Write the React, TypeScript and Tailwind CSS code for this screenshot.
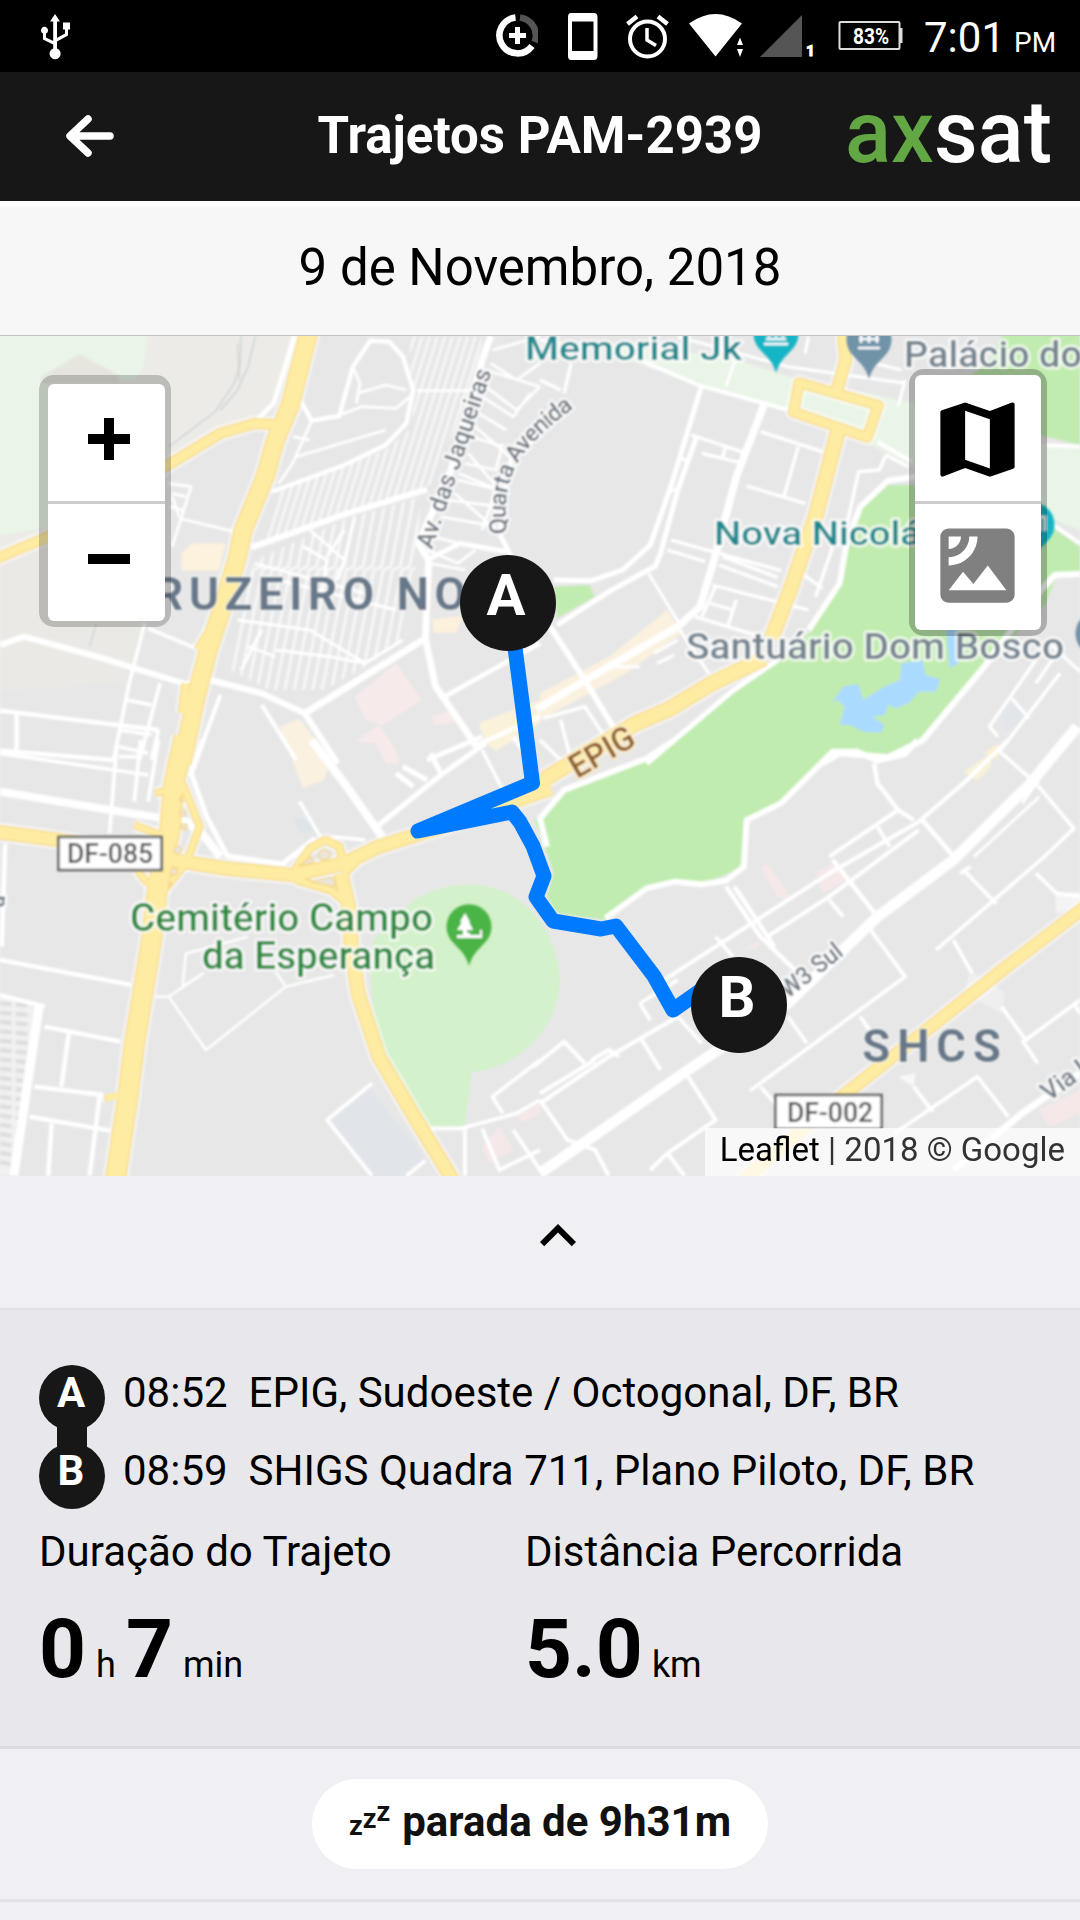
import React from "react";
import { MdExpandLess, MdMap, MdSatellite } from "react-icons/md";

type Line = [string, number];

interface Sector {
  transform: string;
  areas: [string, string][];
  roads: Line[];
  highways: Line[];
}

const S = "scale(0.34439 0.33333)";

const sectors: Sector[] = [
  {
    transform: `translate(0 330) ${S}`,
    areas: [
      ["M0 0H880L800 220L740 255L480 400L0 690Z", "#ecebe7"],
      ["M0 700L140 650L410 880L360 1060L0 1080Z", "#eae9e5"],
      ["M0 0H430L420 100L395 150H350L230 72L150 130L160 590L0 615Z", "#e9f5e6"],
      ["M120 140L230 72L345 135V160H120Z", "#e6e6df"],
      ["M560 640H655L635 722H527V670Z", "#fdf2de"],
      ["M1150 1000L1225 1110L1110 1185L1060 1170L1030 1100Z", "#f7eaea"],
      ["M1030 1235L1100 1185L1150 1260L1160 1300H1120L1090 1240Z", "#f7eaea"],
      ["M1255 1160L1310 1140L1320 1180L1260 1185Z", "#f7eaea"],
      ["M812 1190L870 1168L960 1290L940 1350L880 1375Z", "#fbf1e0"],
      ["M1255 868L1345 858L1325 908H1260Z", "#fdf0dc"],
      ["M1390 1180L1490 1140L1568 1110V1180L1440 1262L1410 1240Z", "#fbf2da"],
    ],
    roads: [
      ["M855 18L795 220L745 270", 14],
      ["M790 485L1000 405L1120 345L1180 280L1200 180L1170 80L1130 35L1075 32L1025 110L985 258L905 272L875 215", 13],
      ["M905 272L850 400L810 460M850 320L900 330M860 380L1120 300M960 265L1050 230L1150 235L1190 200M1040 190L1120 165L1180 180M1025 110L1045 160L1035 220", 8],
      ["M730 652L1000 553L1240 478", 18],
      ["M1425 18L1400 90L1310 420L1215 640L1245 690L1235 925L1265 1070L1345 1190L1390 1260", 20],
      ["M1235 925L885 1150", 20],
      ["M0 945L70 920L300 985L400 1018L540 1062L610 1050L760 1090L885 1150L980 1300", 18],
      ["M760 1125L860 1290M640 1095L570 1290", 12],
      ["M430 895L570 955M420 880L375 1060L330 1290M465 1060L405 1290M350 1200L440 1215M370 1110L440 1125M345 1250L430 1270M460 1200L440 1290", 11],
      ["M0 1142L460 1200M0 1262L330 1290M48 1150V1265", 13],
      ["M490 460L555 470L500 650M520 565L680 605M500 490L540 500M495 530L530 540M500 500L520 560", 8],
      ["M1568 310L1485 385L1462 500L1452 615L1490 690M1240 690L1335 640L1470 665", 14],
      ["M1290 1100L1568 940M1385 1245L1568 1160M1490 1220L1540 1290M1240 1290L1400 1220", 14],
      ["M1210 182H1370M1430 60L1568 20M1425 100L1500 150L1568 100M1410 120L1568 170M1410 170L1500 240L1568 170M1390 250L1470 300M1400 200L1490 260L1540 190M1370 320L1460 350M1380 290L1480 380M1350 400L1440 420L1460 340M1360 370L1450 480L1330 430M1330 450L1450 480M1300 510L1450 530M1320 490L1430 590M1280 560L1440 590M1400 600L1440 480M1260 620L1330 640M1250 700L1350 720M1240 660L1330 700L1380 660", 8],
      ["M740 700L1060 790M690 870L900 900L1060 1000M770 740L1150 840M800 960L960 980L1060 1000L1170 930M900 600L1000 690L980 750M880 650L950 690L930 800M1000 600L950 680M1030 560L1000 690M720 950L800 980M700 1020L760 900", 9],
    ],
    highways: [
      ["M898 0L842 228L800 330L770 440L706 600L690 680L640 850L605 960L572 1090L528 1300", 52],
      ["M810 285L740 280L640 310L480 410L140 620L-20 690", 30],
      ["M575 960L610 900M540 1060L530 1150", 24],
    ],
  },
  {
    transform: `translate(540 330) ${S}`,
    areas: [
      ["M180 40L540 80L740 145L1090 220V410L960 345L720 240L440 150L250 90Z", "#e9f5e6"],
      ["M1440 340L1568 350V600L1440 550Z", "#e9f5e6"],
      ["M1350 0H1568V345L1470 320L1160 200L1300 100Z", "#c1ecb0"],
      ["M1080 465H1010L930 540L900 640L870 760L790 900L690 1000L560 1090L300 1300H820L870 1262L1010 1270L1110 1220L1290 1010L1340 955L1470 820L1500 735L1568 730V650L1440 555Z", "#c1ecb0"],
      ["M850 1115L880 1070L925 1062L938 1110L1000 1070L1045 1050L1050 1000L1110 990L1120 1035L1162 1048L1150 1085H1100L1070 1120L1035 1135L1010 1125L1002 1155L965 1160L1000 1185L990 1208L940 1205L900 1185H870L885 1130L865 1110Z", "#abdaff"],
      ["M1178 890H1215V1000L1190 1015Z", "#abdaff"],
      ["M40 770L145 765L158 800L50 865Z", "#c1ecb0"],
      ["M0 1090L200 980L370 840L410 910L250 1030L0 1170Z", "#fbf1df"],
      ["M1340 1140L1380 1110L1410 1160L1350 1210Z", "#e1e6ea"],
      ["M1290 1270L1330 1240V1290Z", "#fcf0d0"],
    ],
    roads: [
      ["M-10 1138L130 1052L400 890L465 830L508 680L570 440L650 225", 22],
      ["M40 750L150 752L240 720L320 645L380 470L470 165M50 885L200 785L335 708L350 670L400 480L455 320", 15],
      ["M90 100L70 190M0 150L60 180M60 40L0 30", 10],
      ["M300 95L460 165L720 240M980 335L1080 395", 12],
      ["M400 20L720 110L1060 160M540 170L570 80M1060 150L1040 230M970 100L1050 120M780 20L770 70", 9],
      ["M440 315L600 370M470 370L590 400M540 345L530 385M410 380L425 395M380 480H400", 10],
      ["M640 305L820 365M750 350L708 500M600 468L770 520M1005 375L985 420L925 425L890 590M1005 375L1070 410", 10],
      ["M380 630L700 722M370 660L480 695M530 680L690 742M520 705L690 770M500 765L780 840M760 730L820 775M450 860L640 920M850 650L800 800M570 810L545 890M510 770L470 860M495 820L560 840", 10],
      ["M30 890L130 1050L215 1195", 17],
      ["M315 730L410 890M400 890L490 1030M200 1010L290 1010M330 970L400 930M340 1000L390 975", 9],
      ["M1090 440L1010 452L930 530L890 640L870 760L780 900", 17],
      ["M310 1300L560 1082L690 990", 15],
      ["M1568 732L1495 735L1455 780L1290 1010L1110 1232L1010 1282L870 1270L820 1300", 18],
      ["M1480 940L1568 1025M1440 990L1305 1190L1330 1220M1510 1030L1330 1270M1370 1105L1420 1165M1500 970L1440 1060", 10],
      ["M10 1165L130 1130L200 1240M60 1170L90 1290M0 1230L60 1290", 10],
      ["M1470 345L1568 350M1440 550L1568 640", 12],
    ],
    highways: [
      ["M880 0L888 90L862 180", 34],
      ["M752 158L982 226L950 322L736 246Z", 29],
      ["M866 300L800 560L730 770L672 925", 42],
      ["M650 985L500 1060L380 1135L275 1182L-30 1375", 44],
    ],
  },
  {
    transform: `translate(0 740) ${S}`,
    areas: [
      ["M1190 490C1260 440 1320 432 1380 435C1510 440 1615 560 1625 710C1630 860 1500 990 1370 995L1350 1158L1240 1165C1100 1000 1060 800 1085 600Z", "#d3f1ca"],
      ["M950 1140L1070 1035L1230 1250L1180 1320H1080Z", "#e1e5e9"],
      ["M1500 1130L1568 1090V1120L1520 1145Z", "#f5e8e8"],
      ["M1400 1220L1450 1160L1490 1230L1420 1270Z", "#f5e8e8"],
      ["M850 230L900 240L925 275L870 280Z", "#dfe4e8"],
    ],
    roads: [
      ["M0 155L330 212L540 245L590 285L640 350", 24],
      ["M0 40L430 105M340 0L318 280M408 0L390 185M460 0L430 185M345 50H400", 11],
      ["M590 0L555 100L600 230L660 348L820 372L915 295", 15],
      ["M905 0L1000 130L1110 290", 24],
      ["M1100 255L1280 105L1410 10M1150 100L1200 140M1170 80L1240 120M1250 40L1280 100", 15],
      ["M870 185L930 290M1400 30L1460 150M960 290L1060 300", 10],
      ["M0 660L380 735M0 765L130 800M200 880L178 1040M130 860L350 905M100 1040L300 1065M85 1130L320 1172M290 1065L260 1308M150 1150L140 1308M15 310L5 620", 13],
      ["M115 790L40 1308", 26],
      ["M450 770H490L598 930L830 740L800 695M490 770L590 700L530 740L540 640L600 625L720 590M830 740L970 705", 7],
      ["M1080 1030L950 1140L1080 1308M1240 1165H1340L1500 1120L1568 1080M1350 1165V1308M1568 960L1430 1070L1460 1120M1400 1165L1450 1290L1568 1230M1180 1308L1235 1262M1490 1170L1568 1290", 11],
    ],
    highways: [
      ["M535 -10L505 130L492 280L458 440L440 600L418 740L392 900L370 1080L335 1320", 58],
      ["M530 130L580 260L540 370L470 460L420 420L400 390M450 160L490 150M390 255L480 290", 20],
      ["M-10 275L170 300L400 345L550 368L650 385L850 405L1000 370L1100 320L1270 265L1600 145", 40],
      ["M850 400L900 325L945 300L985 320L1000 380M860 420L960 450L1010 490M1000 400L1040 360", 22],
      ["M990 400L1012 500L1020 620L1040 760L1100 950L1200 1125L1315 1320", 40],
      ["M325 1060L330 1080", 44],
    ],
  },
  {
    transform: `translate(540 740) ${S}`,
    areas: [
      ["M-15 240L70 155L310 55L390 0H1095L1055 38L980 50L920 30L860 35L800 90L700 190L600 240L590 380L480 430L380 425L310 445L190 540L50 520L20 470L40 400L10 310Z", "#c1ecb0"],
      ["M640 385L660 370L740 490L690 470Z", "#f6e8e8"],
      ["M800 400L860 365L890 420L820 460Z", "#f6e8e8"],
      ["M590 630L640 600L630 625Z", "#f6e8e8"],
      ["M1230 95L1310 38V80L1270 122Z", "#f8f2d8"],
      ["M1450 1110L1568 1050V1120L1480 1160Z", "#f6e8e8"],
      ["M1040 1010L1090 1000L1085 1040Z", "#f8f8f8"],
      ["M1250 690L1350 760L1340 820L1230 760Z", "#efefef"],
      ["M1495 460L1568 455V500L1500 520Z", "#f4f4f4"],
    ],
    roads: [
      ["M1095 0L1060 42L980 62L920 35H850L700 190L600 240L592 380L540 422L470 433L390 425L310 445L190 535", 17],
      ["M390 0L310 55L70 150L0 235L20 320", 17],
      ["M0 1300L430 990L720 790L980 530L1200 360L1420 135L1560 -40", 32],
      ["M0 1090L200 950L400 830M0 1060L160 960M-20 980L70 905L130 970M330 740L510 620L840 400L1100 245L1240 120L1360 0M660 590L840 470L1100 270M1040 210L840 350", 12],
      ["M0 1080L80 1200L160 1230L200 1308M290 890L350 990M430 1010L510 1140L370 1240L320 1290M370 1240L420 1308M150 960L200 930L230 950", 12],
      ["M540 440L640 590L740 690M565 440L680 620M850 360L980 530M970 70L980 130L1040 210L1085 240M1110 240L1210 360", 13],
      ["M1230 390L1325 492M960 570L1060 710L610 1052M720 830L775 910M980 260L1015 320M840 480L880 530M510 590L560 650M290 790L320 840", 11],
      ["M1150 630L1470 345L1550 265L1440 130L1330 30M1440 400L1500 460L1568 470M1200 600L1255 700M1340 800L1410 900L1568 780M1400 900L1445 970M1550 790L1568 820", 11],
      ["M930 830L970 890M1085 1040L1140 1115M1030 1180L1270 1010L1360 1130M640 1040L700 1110M1220 400L1250 380", 11],
      ["M1200 1290L1400 1120L1568 1000", 20],
      ["M1450 170L1260 350M1490 60L1400 190", 8],
      ["M290 790L400 720M400 830L470 910", 10],
    ],
    highways: [["M1590 495L1340 692L1150 848L870 1075L590 1320", 36]],
  },
];

function Hatching() {
  const blocks = Array.from({ length: 34 }, (_, i) => i);
  return (
    <g transform={`translate(0 330) ${S}`} stroke="#fff" fill="none">
      <clipPath id="north">
        <path d="M1190 20H1400L1380 150L1250 465L760 635L810 480L1120 360L1200 290Z" />
      </clipPath>
      <clipPath id="south">
        <path d="M690 800L740 690L1000 570L1220 500L1215 650L1180 920L1060 1010L940 1080L840 1110L670 1020Z" />
      </clipPath>
      <g clipPath="url(#north)" strokeWidth="8" opacity="0.65">
        {blocks.map((i) => (
          <path key={i} d={`M${880 + i * 22} 0L${680 + i * 22} 660`} />
        ))}
      </g>
      <g clipPath="url(#south)" strokeWidth="8" opacity="0.7">
        {blocks.slice(0, 30).map((i) => (
          <path key={i} d={`M${780 + i * 27} 450l-50 260l-22 10l-70 360`} />
        ))}
      </g>
    </g>
  );
}

function ParkedLots() {
  return (
    <g transform={`translate(0 740) ${S}`}>
      <path d="M0 765L115 795L40 1308H0Z" fill="#f1f1f1" />
      <g stroke="#dedede" strokeWidth="13" strokeDasharray="34 12">
        {Array.from({ length: 18 }, (_, i) => (
          <path key={i} d={`M0 ${790 + i * 28}L${96 - i * 3.6} ${798 + i * 28}`} />
        ))}
      </g>
    </g>
  );
}

function Pin({ x, y, color, children }: { x: number; y: number; color: string; children?: React.ReactNode }) {
  return (
    <g transform={`translate(${x} ${y})`}>
      <path d="M0 39C-3 28-8 24-15 16.500A22.500 22.500 0 1 1 15 16.500C8 24 3 28 0 39Z" fill={color} />
      {children}
    </g>
  );
}

function StreetMap() {
  return (
    <svg className="block h-full w-full" viewBox="0 336 1080 840" fontFamily="Roboto, sans-serif">
      <defs>
        <filter id="tile" x="0" y="0" width="1" height="1">
          <feGaussianBlur stdDeviation="0.8" />
        </filter>
        <path id="quarta" d="M507 534C502 478 512 452 582 402" />
      </defs>
      <g filter="url(#tile)" strokeLinejoin="round">
        <rect y="330" width="1080" height="850" fill="#e7e7e7" />
        {sectors.map((s) => (
          <g key={s.transform} transform={s.transform}>
            {s.areas.map(([d, c]) => (
              <path key={d} d={d} fill={c} />
            ))}
          </g>
        ))}
        <g transform={`translate(0 330) ${S}`} fill="none" stroke="#ccd1d4" strokeWidth="4">
          <path d="M700 18L698 100L680 160L625 245L490 350" />
          <path d="M742 18L720 110L690 180L640 240M690 40L695 150M280 880L260 950" />
        </g>
        <ParkedLots />
        <Hatching />
        {sectors.map((s) => (
          <g key={s.transform} transform={s.transform} fill="none" stroke="#fff">
            {s.roads.map(([d, w]) => (
              <path key={d} d={d} strokeWidth={w} />
            ))}
          </g>
        ))}
        {sectors.map((s) => (
          <g key={s.transform} transform={s.transform} fill="none" stroke="#fff" strokeOpacity="0.6">
            {s.highways.map(([d, w]) => (
              <path key={d} d={d} strokeWidth={w + 18} />
            ))}
          </g>
        ))}
        {sectors.map((s) => (
          <g key={s.transform} transform={s.transform} fill="none" stroke="#f7da88">
            {s.highways.map(([d, w]) => (
              <path key={d} d={d} strokeWidth={w + 4} />
            ))}
          </g>
        ))}
        {sectors.map((s) => (
          <g key={s.transform} transform={s.transform} fill="none" stroke="#feeca2">
            {s.highways.map(([d, w]) => (
              <path key={d} d={d} strokeWidth={w - 4} />
            ))}
          </g>
        ))}
        <g transform={`translate(0 740) ${S}`} fill="#e9e6dc" stroke="#f6d683" strokeWidth="4">
          <circle cx="942" cy="345" r="16" />
          <path d="M900 425L968 412L975 440ZM865 378L905 350L910 368Z" />
          <circle cx="530" cy="218" r="9" />
          <circle cx="535" cy="260" r="9" />
          <circle cx="515" cy="330" r="11" />
          <circle cx="505" cy="395" r="10" />
          <path d="M490 425l8 5l-8 14zM524 170l10 14h-12z" />
        </g>
      </g>

      <g filter="url(#tile)">
        <rect x="58.500" y="837" width="103" height="33" fill="#fff" stroke="#606060" strokeWidth="2.500" />
        <rect x="775.500" y="1095" width="106" height="34" fill="#fff" stroke="#606060" strokeWidth="2.500" />
        <g fontWeight="500" fill="#555" fontSize="27">
          <text x="67" y="863" textLength="86" lengthAdjust="spacingAndGlyphs">DF-085</text>
          <text x="787" y="1122" textLength="86" lengthAdjust="spacingAndGlyphs">DF-002</text>
        </g>
        <g stroke="#fff" strokeWidth="5" strokeLinejoin="round" strokeOpacity="0.75" paintOrder="stroke" fontWeight="500">
          <g fill="#1f8a8e">
            <text x="525" y="360" fontSize="34" textLength="217" lengthAdjust="spacingAndGlyphs">Memorial Jk</text>
            <text x="714" y="544.500" fontSize="34" textLength="207" lengthAdjust="spacingAndGlyphs">Nova Nicolá</text>
          </g>
          <g fill="#76848f">
            <text x="904" y="367" fontSize="36" textLength="178" lengthAdjust="spacingAndGlyphs">Palácio do</text>
            <text x="686" y="659" fontSize="37" textLength="378" lengthAdjust="spacingAndGlyphs">Santuário Dom Bosco</text>
          </g>
          <g fill="#2f8b43">
            <text x="130" y="931" fontSize="38" textLength="303" lengthAdjust="spacingAndGlyphs">Cemitério Campo</text>
            <text x="202" y="969" fontSize="38" textLength="233" lengthAdjust="spacingAndGlyphs">da Esperança</text>
          </g>
          <g fill="#6d7780" fontSize="25">
            <text transform="translate(432 550) rotate(-71.500)" textLength="188" lengthAdjust="spacingAndGlyphs">Av. das Jaqueiras</text>
            <text fontSize="24">
              <textPath href="#quarta" textLength="152">Quarta Avenida</textPath>
            </text>
            <text transform="translate(788 999) rotate(-38)" textLength="72" lengthAdjust="spacingAndGlyphs">W3 Sul</text>
            <text transform="translate(1049 1102) rotate(-36)">Via L2</text>
            <text transform="translate(4 908) rotate(-84)" fontSize="23">a</text>
          </g>
          <text transform="translate(577 779) rotate(-30)" fontSize="33" fill="#8f5f2c" stroke="#fdeec8" textLength="70" lengthAdjust="spacingAndGlyphs">EPIG</text>
        </g>
        <g fill="#677889" fontWeight="700" fontSize="46" stroke="#fff" strokeWidth="3" strokeOpacity="0.5" paintOrder="stroke">
          <text x="154" y="610" textLength="312">RUZEIRO NO</text>
          <text x="862" y="1062" textLength="139">SHCS</text>
        </g>
        <Pin x={776} y={334} color="#12b5c5">
          <path d="M-12 10H12M-10 5H10M-7 3V-8M0 3V-8M7 3V-8M-7-2H7" stroke="#fff" strokeWidth="2.500" />
        </Pin>
        <Pin x={869} y={340} color="#7193a8">
          <path d="M-11 8H11M-8 3V-8M0 3V-8M8 3V-8M-10-1H10" stroke="#fff" strokeWidth="2.500" />
        </Pin>
        <Pin x={1032} y={525} color="#12b5c5">
          <path d="M8 6V-8H13V6" stroke="#fff" strokeWidth="2.500" fill="none" />
        </Pin>
        <Pin x={1098} y={634} color="#7193a8" />
        <Pin x={469} y={927} color="#4bb446">
          <path d="M-4-14L-9-5H-7L-12 3H-6V8H-12V11H13V3H11V8H1V6H-2V3H4L0-5H1Z" fill="#fff" />
        </Pin>
      </g>
      <path d="M514 640L532.500 783L418 831L512 812L520 822L533 846L544 876L536 897L553 921L601 929L616 926L654 976L673 1010L710 984" fill="none" stroke="#007bff" strokeWidth="15" strokeLinejoin="round" strokeLinecap="round" />
    </svg>
  );
}

function StatusBar() {
  return (
    <div className="flex h-[72px] items-center bg-black text-white">
      <svg className="ml-[40px] h-[48px] w-[32px]" viewBox="40 12 32 48" fill="#fff">
        <path d="M55 14L60 21.500H57V38L65 33.500V29.500H63V22.500H70V29.500H68V35.500L57 41.500V48.500A5.500 5.500 0 1 1 53.200 48.500V44.500L43 39.500V33.500A3.500 3.500 0 1 1 46 33.500V37.500L53.200 41V21.500H50Z" />
      </svg>
      <svg className="ml-[424px] h-[46px] w-[42px]" viewBox="496 14 42 46" fill="none" strokeWidth="6.500">
        <path d="M515.500 18.500A18 18 0 1 0 532 47" stroke="#fff" />
        <path d="M520 18.500A18 18 0 0 1 534.500 43" stroke="#555" />
        <path d="M517.500 28V45M509 36.500H526" stroke="#fff" strokeWidth="5" />
      </svg>
      <svg className="ml-[30px] h-[48px] w-[30px]" viewBox="568 12 30 48">
        <path fill="#fff" fillRule="evenodd" d="M571 13H594Q597.500 13 597.500 17V56Q597.500 60 594 60H571Q568 60 568 56V17Q568 13 571 13ZM572 21.500V51H593.500V21.500Z" />
      </svg>
      <svg className="ml-[28px] h-[48px] w-[44px]" viewBox="626 12 44 48" fill="none" stroke="#fff">
        <circle cx="647.500" cy="39" r="17.500" strokeWidth="4" />
        <path d="M647 28V40L656 45.500" strokeWidth="3.500" />
        <path d="M627.500 24L637 16.500M667.500 24L658 16.500" strokeWidth="4.500" />
      </svg>
      <svg className="ml-[18px] h-[48px] w-[56px]" viewBox="688 12 56 48" fill="#fff">
        <path d="M689 23.500Q715.500 4.500 742 23.500L715.500 56.500ZM740 37.500L743 45H737ZM740 57L743 49H737Z" />
      </svg>
      <svg className="ml-[16px] h-[48px] w-[56px]" viewBox="760 12 56 48">
        <path d="M802 15V57H760Z" fill="#555" />
        <text x="806" y="55.500" fontSize="15" fontWeight="900" fill="#fff" stroke="#fff" strokeWidth="0.800" fontFamily="Roboto, sans-serif">1</text>
      </svg>
      <svg className="ml-[22px] h-[32px] w-[66px]" viewBox="838 20 66 32">
        <rect x="839.500" y="22" width="60" height="27" rx="1" fill="none" stroke="#ddd" strokeWidth="2" />
        <path d="M900 28H902.500V43H900Z" fill="#ddd" />
        <text x="853" y="43.500" fontSize="22" fontWeight="700" fill="#fff" textLength="36" lengthAdjust="spacingAndGlyphs" fontFamily="Roboto, sans-serif">83%</text>
      </svg>
      <span className="mt-[3px] ml-[20px] flex items-baseline leading-none whitespace-nowrap">
        <span className="text-[42px]">7:01</span>
        <span className="ml-[9px] text-[28px]">PM</span>
      </span>
    </div>
  );
}

function Header() {
  return (
    <header className="grid h-[129px] grid-cols-[317px_446px_317px] items-center bg-[#171717] text-white">
      <svg className="mb-[2px] ml-[64px] h-[48px] w-[52px]" viewBox="64 112 52 48" fill="none" stroke="#fff" strokeWidth="7.500" strokeLinecap="round" strokeLinejoin="round">
        <path d="M88 119L70 136L88 153M71 136H110" />
      </svg>
      <h1 className="pb-[2px] text-center text-[51px] leading-[60px] font-bold whitespace-nowrap">Trajetos PAM-2939</h1>
      <svg className="ml-[81px] h-[109px] w-[216px]" viewBox="844 82 216 109" fontFamily="Roboto, sans-serif" fontSize="87" fontWeight="500">
        <text x="845" y="162" fill="#62a744" textLength="89" lengthAdjust="spacingAndGlyphs">ax</text>
        <text x="934" y="162" fill="#fff" textLength="118" lengthAdjust="spacingAndGlyphs">sat</text>
      </svg>
    </header>
  );
}

function MapMarker({ label, className }: { label: string; className: string }) {
  return (
    <div className={`absolute flex h-24 w-24 justify-center rounded-full bg-[#171717] pr-[4px] text-[58px] leading-[80px] font-bold text-white ${className}`}>
      {label}
    </div>
  );
}

function MapPanel() {
  return (
    <section className="relative h-[840px] overflow-hidden">
      <StreetMap />
      <MapMarker label="A" className="top-[219px] left-[460px]" />
      <MapMarker label="B" className="top-[621px] left-[691px]" />
      <div className="absolute top-[39px] left-[39px] flex h-[252px] w-[132px] flex-col rounded-[15px] bg-black/20 pt-[9px] pr-[6px] pb-[6px] pl-[9px]">
        <button className="flex h-[117px] items-center justify-center rounded-t-[6px] bg-white pl-[5px]">
          <svg className="mt-[-7px] h-[42px] w-[42px]" viewBox="0 0 42 42" stroke="#000" strokeWidth="10">
            <path d="M0 21H42M21 0V42" />
          </svg>
        </button>
        <div className="h-[3px] bg-[#ccc]" />
        <button className="flex h-[117px] items-center justify-center rounded-b-[6px] bg-white pl-[5px]">
          <span className="mt-[-7px] h-[10px] w-[42px] bg-black" />
        </button>
      </div>
      <div className="absolute top-[33px] left-[909px] flex h-[267px] w-[138px] flex-col rounded-[15px] bg-black/25 p-[6px]">
        <button className="flex h-[126px] items-center justify-center rounded-t-[6px] bg-white pt-[2px] pr-[2px]">
          <MdMap size={99} color="#000" />
        </button>
        <div className="h-[3px] bg-[#ccc]" />
        <button className="flex h-[126px] items-center justify-center rounded-b-[6px] bg-white pr-[2px] pb-[4px]">
          <MdSatellite size={99} color="#808080" />
        </button>
      </div>
      <div className="absolute right-0 bottom-0 flex h-[48px] w-[375px] items-center justify-end bg-white/70 pr-[15px] pb-[5px] text-[33px] leading-none whitespace-nowrap text-[#333]">
        <span className="text-black">Leaflet</span>&nbsp;| 2018 © Google
      </div>
    </section>
  );
}

function Stop({ label, time, place, joined }: { label: string; time: string; place: string; joined?: boolean }) {
  return (
    <div className="flex h-[78px] items-center">
      <div className="relative flex h-full w-[66px] items-end">
        {joined && <div className="absolute top-[-12px] left-[18px] h-[36px] w-[30px] bg-[#171717]" />}
        <div className="relative flex h-[66px] w-[66px] justify-center rounded-full bg-[#171717] pr-[2px] text-[42px] leading-[55px] font-bold text-white">
          {label}
        </div>
      </div>
      <span className="mt-[2px] ml-[18px] whitespace-nowrap">{time}</span>
      <span className="mt-[2px] ml-[21px] whitespace-nowrap">{place}</span>
    </div>
  );
}

function TripCard() {
  return (
    <section className="h-[441px] border-t-2 border-b-[3px] border-t-[#e1e1e5] border-b-[#dcdce0] bg-[#e8e8ec] px-[39px] pt-[43px] text-[42px] leading-none text-black">
      <Stop label="A" time="08:52" place="EPIG, Sudoeste / Octogonal, DF, BR" />
      <Stop label="B" time="08:59" place="SHIGS Quadra 711, Plano Piloto, DF, BR" joined />
      <div className="grid grid-cols-[486px_1fr]">
        <div>
          <div className="flex h-[84px] items-center pt-[2px]">Duração do Trajeto</div>
          <div className="flex h-[112px] items-center">
            <div className="flex items-baseline">
              <span className="text-[82px] font-bold">0</span>
              <span className="ml-[10px] text-[36px]">h</span>
              <span className="ml-[10px] text-[82px] font-bold">7</span>
              <span className="ml-[10px] text-[36px]">min</span>
            </div>
          </div>
        </div>
        <div>
          <div className="flex h-[84px] items-center pt-[2px]">Distância Percorrida</div>
          <div className="flex h-[112px] items-center">
            <div className="flex items-baseline">
              <span className="text-[82px] font-bold">5.0</span>
              <span className="ml-[9px] text-[36px]">km</span>
            </div>
          </div>
        </div>
      </div>
    </section>
  );
}

export default function App() {
  return (
    <main className="flex h-[1920px] w-[1080px] flex-col overflow-hidden bg-[#efeff4] font-['Roboto',sans-serif]">
      <StatusBar />
      <Header />
      <div className="flex h-[135px] items-center justify-center border-t-[6px] border-b border-t-[#fdfdfd] border-b-[#c4c4c4] bg-[#f7f7f7] pb-[8px] text-[51px] leading-none text-black">
        9 de Novembro, 2018
      </div>
      <MapPanel />
      <div className="flex h-[132px] items-center justify-center pb-[12px] pl-[36px]">
        <MdExpandLess size={72} color="#000" />
      </div>
      <TripCard />
      <section className="flex h-[153px] items-center justify-center border-b-[3px] border-[#e2e2e7]">
        <div className="flex h-[90px] w-[456px] items-center justify-center rounded-full bg-white pb-[4px] text-[#111]">
          <span className="flex items-end text-[27px] leading-none font-bold">
            <span className="pb-[5px]">z</span>
            <span className="pb-[12px]">z</span>
            <span className="pb-[19px]">z</span>
          </span>
          <span className="ml-[12px] text-[42px] leading-none font-bold whitespace-nowrap">parada de 9h31m</span>
        </div>
      </section>
    </main>
  );
}
